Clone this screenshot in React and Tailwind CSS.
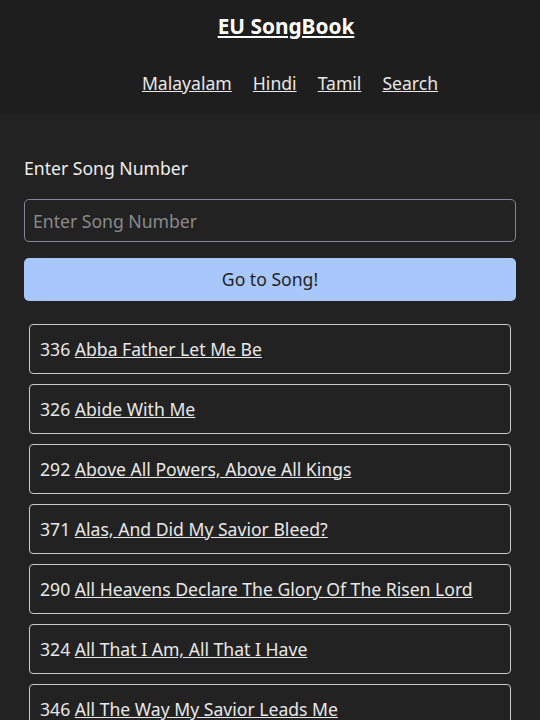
import { useState } from 'react';

const songs = [
    { no: 336, title: 'Abba Father Let Me Be' },
    { no: 326, title: 'Abide With Me' },
    { no: 292, title: 'Above All Powers, Above All Kings' },
    { no: 371, title: 'Alas, And Did My Savior Bleed?' },
    { no: 290, title: 'All Heavens Declare The Glory Of The Risen Lord' },
    { no: 324, title: 'All That I Am, All That I Have' },
    { no: 346, title: 'All The Way My Savior Leads Me' },
];

const App = () => {
    const [num, setNum] = useState('');

    return (
        <div className="min-h-[720px] bg-[#222222] text-[#e8e8e8] font-['Noto_Sans',sans-serif]">
            <header className="bg-[#1e1e1e] h-[115px] flex flex-col items-center">
                <a href="#" className="mt-[11px] pl-8 text-[20.8px] font-bold underline text-white leading-[30px]">EU SongBook</a>
                <nav className="mt-[29px] pl-10 flex gap-[21px] text-[17.6px] leading-[26px]">
                    <a href="#" className="underline">Malayalam</a>
                    <a href="#" className="underline">Hindi</a>
                    <a href="#" className="underline">Tamil</a>
                    <a href="#" className="underline">Search</a>
                </nav>
            </header>

            <main className="px-6 pt-[41px]">
                <label className="block text-[17.6px] leading-[24px] text-[#eeeeee]">Enter Song Number</label>
                <input
                    value={num}
                    onChange={e => setNum(e.target.value)}
                    placeholder="Enter Song Number"
                    className="mt-[19px] w-full h-[43px] px-2 rounded-[5px] border border-[#85859a] bg-transparent text-[17.6px] placeholder:text-[#8a8a8a] outline-none"
                />
                <button className="mt-4 w-full h-[43px] rounded-[5px] bg-[#a8c7fa] text-[#1f1f1f] text-[17.6px]">Go to Song!</button>

                <ul className="mt-[23px] px-[5px] flex flex-col gap-[10px]">
                    {songs.map(s => (
                        <li key={s.no} className="h-[50px] flex items-center px-[10px] border border-[#c8c8c8] rounded-[4px] text-[17.6px]">
                            <span>{s.no}&nbsp;</span>
                            <a href="#" className="underline">{s.title}</a>
                        </li>
                    ))}
                </ul>
            </main>
        </div>
    );
};

export default App;
